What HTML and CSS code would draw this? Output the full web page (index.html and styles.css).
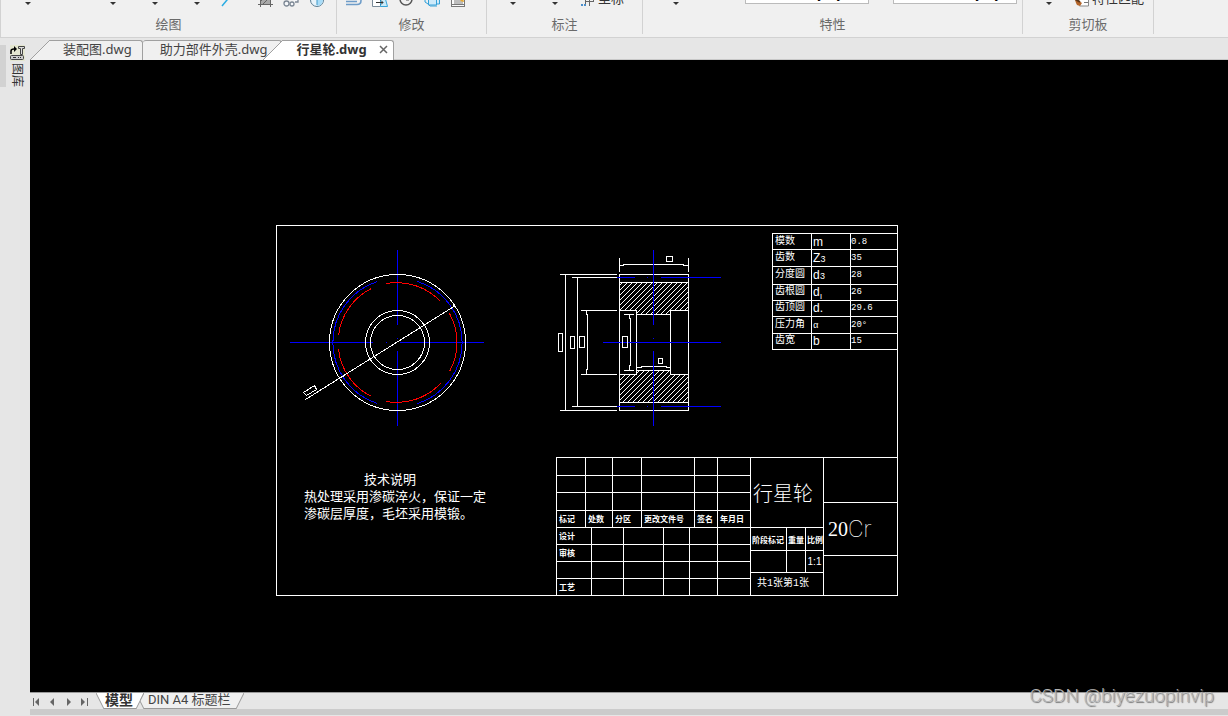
FILE: index.html
```html
<!DOCTYPE html>
<html lang="zh-CN">
<head>
    <meta charset="UTF-8">
    <meta name="viewport" content="width=device-width, initial-scale=1.0">
    <title>行星轮.dwg</title>
    <link rel="stylesheet" href="styles.css">
</head>
<body>
    <!-- 功能区 -->
    <header class="ribbon">
        <section class="group group-draw">
            <div class="tools">
                <button class="drop" aria-label="直线"></button>
                <button class="drop spaced" aria-label="多段线"></button>
                <button class="drop" aria-label="圆"></button>
                <button class="drop" aria-label="圆弧"></button>
                <button class="tool slim" aria-label="射线">
                    <svg width="16" height="16"><path d="M4 14L14 2" stroke="#29abe2" stroke-width="1.5"/></svg>
                </button>
                <button class="tool after-slim" aria-label="填充">
                    <svg width="16" height="16"><rect x="3" y="2" width="10" height="10" fill="#a9a9a9"/><path d="M1 12.5H16M3.5 0V15M13.5 0V15M3 10l8-8M6 12l7-7" stroke="#666" fill="none"/></svg>
                </button>
                <button class="tool" aria-label="块">
                    <svg width="16" height="16"><g fill="#f5f7fa" stroke="#7c8794" stroke-width="1.3"><circle cx="3.5" cy="11.5" r="2.5"/><circle cx="9" cy="12" r="2"/><path d="M6 4h9v6h-3M7 4v4"/></g></svg>
                </button>
                <button class="tool" aria-label="面域">
                    <svg width="16" height="16"><circle cx="8" cy="8" r="6.5" fill="#e8f3fa" stroke="#5b7e94"/><path d="M8 2a6 6 0 0 1 0 12z" fill="#a8dcf8"/><path d="M8 1v12" stroke="#4199c8"/></svg>
                </button>
            </div>
            <h2>绘图</h2>
        </section>
        <section class="group group-modify">
            <div class="tools">
                <button class="tool" aria-label="偏移">
                    <svg width="16" height="16"><path d="M0 9.500h11M0 12.500h11c3 0 4-2 4-4s-2-3-3-3" fill="none" stroke="#6e9cc8" stroke-width="1.6"/></svg>
                </button>
                <button class="tool" aria-label="拉伸">
                    <svg width="16" height="16"><path d="M.5 1v13.500h8V1" fill="#fff" stroke="#7a8b99"/><path d="M8.500 14.500h7l-3-11h-4z" fill="#c9ebfa" stroke="#36a4d9"/><path d="M4 10.500h7m-2-2l2 2-2 2" fill="none" stroke="#333"/></svg>
                </button>
                <button class="tool" aria-label="旋转">
                    <svg width="16" height="16"><circle cx="8" cy="7" r="6" fill="none" stroke="#555" stroke-width="1.5"/><path d="M8 8h3V5" fill="none" stroke="#555"/></svg>
                </button>
                <button class="tool" aria-label="阵列">
                    <svg width="16" height="16"><g fill="#cdeafa" stroke="#35a1d8"><path d="M4.500 4v9h8V4M1 7v3l3 2M15.500 3v9h-3"/><path d="M4 12l2 2h7" fill="none"/></g></svg>
                </button>
                <button class="tool" aria-label="图像">
                    <svg width="16" height="16"><rect x="1.500" y=".5" width="13" height="14" fill="#fafafa" stroke="#777"/><path d="M4 2h9v10H4z" fill="#bdbdbd"/><path d="M10 9l3-3 1 4z" fill="#e6a72e"/><path d="M2 12.500h12" stroke="#777"/></svg>
                </button>
            </div>
            <h2>修改</h2>
        </section>
        <section class="group group-dimension">
            <div class="tools">
                <button class="drop" aria-label="线性"></button>
                <button class="drop" aria-label="引线"></button>
                <button class="text-tool">
                    <svg width="16" height="16"><path d="M5 9.500h9M9.500 2v12M5.500 14V6m8 3V3" fill="none" stroke="#666"/><path d="M1 12h2v2H1zM4 12h2v2H4z" fill="#4b8dca"/></svg>
                    <span>坐标</span>
                </button>
            </div>
            <h2>标注</h2>
        </section>
        <section class="group group-props">
            <div class="tools">
                <button class="drop" aria-label="图层"></button>
                <select class="linetype" aria-label="线型"><option>ByLayer</option></select>
                <select class="lineweight" aria-label="线宽"><option>ByLayer</option></select>
            </div>
            <h2>特性</h2>
        </section>
        <section class="group group-clip">
            <div class="tools">
                <button class="drop" aria-label="粘贴"></button>
                <button class="text-tool">
                    <svg width="16" height="16"><path d="M5.500 1h9v13h-9" fill="#fff" stroke="#888"/><path d="M8 4.500h5M10 7.500h4M10 10.500h4" stroke="#777"/><path d="M1 8l4 1 3 2-2 3-3-1-1-2z" fill="#b4652a"/><path d="M1 7l5 3" stroke="#5c3518" stroke-width="2"/></svg>
                    <span>特性匹配</span>
                </button>
            </div>
            <h2>剪切板</h2>
        </section>
    </header>

    <div class="workspace">
        <aside class="sidebar">
            <button class="library">
                <svg width="15" height="16"><path d="M0 0h15v16H0z" fill="#e4e6d0"/><path d="M1 9V6q0-2 3-2h2" fill="none" stroke="#000" stroke-width="1.500"/><path d="M4 1l3 3-3 3z"/><path d="M8.500 1.500h6v2h-2v6h-2v-6h-2z" fill="#ddd" stroke="#444"/><rect x=".5" y="10.500" width="13" height="4" rx="1" fill="#ccc" stroke="#444"/><path d="M3 12.500h3m2 0h1m1 0h1" stroke="#333"/></svg>
                <span>图库</span>
            </button>
        </aside>

        <main class="editor">
            <nav class="file-tabs">
                <a class="file-tab" href="#">
                    <svg class="slant" width="20" height="20"><path d="M0 20L20 0V20z" fill="#f0f0f0"/><path d="M0 20L20 0" stroke="#a0a0a0"/></svg>
                    <span class="first">装配图.dwg</span>
                </a>
                <a class="file-tab" href="#"><span class="second">助力部件外壳.dwg</span></a>
                <a class="file-tab active" href="#">
                    <svg class="slant" width="20" height="20"><path d="M0 20L20 0V20z" fill="#fff"/><path d="M0 20L20 0" stroke="#a0a0a0"/></svg>
                    <span>行星轮.dwg
                        <svg width="9" height="9"><path d="M1 1l7 7M8 1L1 8" stroke="#666" stroke-width="1.500"/></svg>
                    </span>
                </a>
            </nav>

            <div class="canvas">
                <div class="sheet">
                    <svg class="views" width="620" height="369" viewBox="1 1 620 369" fill="none" stroke="#fff" shape-rendering="crispEdges">
                        <defs>
                            <pattern id="hatch" width="5" height="5" patternUnits="userSpaceOnUse">
                                <path d="M0 4h1v1H0zM1 3h1v1H1zM2 2h1v1H2zM3 1h1v1H3zM4 0h1v1H4z" fill="#fff" stroke="none"/>
                            </pattern>
                        </defs>

                        <!-- 主视图 -->
                        <g transform="translate(121.5 117.5)">
                            <path stroke="#00f" d="M-108 0H-25M-12 0h1M2 0H86M0-93V-18M0-5v1M0 8V83"/>
                            <path stroke="#00f" d="M20-61A64 64 0 0 1 20 61M-20-61A64 64 0 0 0-20 61"/>
                            <path stroke="#f00" d="M-26-54A60 60 0 0 0-59-7M-59 7A60 60 0 0 0-26 54M-11-59A60 60 0 0 1 43-41M52-29A60 60 0 0 1 52 29M-11 59A60 60 0 0 0 43 41"/>
                            <circle r="68"/>
                            <circle r="32"/>
                            <circle r="27"/>
                            <path d="M58-37L-92 57M-94 50l11-7 2 4-10 6z"/>
                            <path d="M56-37l2 2M-55 35l2-2"/>
                        </g>

                        <!-- 剖视图 -->
                        <g transform="translate(269 15)">
                            <path fill="url(#hatch)" d="M74.500 42.500h69v28h-18v4h-34v-4h-17zM74.500 162.500h69v-28h-18v-4h-34v4h-17z"/>
                            <path d="M74.500 34.500h69v136h-69zM91.500 70.500v64M125.500 70.500v64"/>
                            <path d="M15 34.500h57M15 170.500h57M20.500 34.500v136M27 37.500h45M27 166.500h45M32.500 37.500v129"/>
                            <path d="M36 70.500h36M36 134.500h36M41.500 70.500v4h1v55h-1v5M79 74.500h10M79 130.500h10M84.500 74.500v4h1v47h-1v5"/>
                            <path d="M74.500 18v14M143.500 18v14M74.500 25.500h4v-1h60v1h5M91.500 127.500h5v-1h25v1h4"/>
                            <path d="M121.500 16.500h6v5h-6zM113.500 118.500h4v5h-4zM13.500 93.500h4v18h-4zM25.500 96.500h4v12h-4zM34.500 96.500h5v11h-5z"/>
                            <path stroke="#00f" d="M72 37.500h18M102 37.500h1M116 37.500h60M72 166.500h18M102 166.500h1M116 166.500h60M58 102.500h118M108.500 10v75M108.500 98v1M108.500 111v75"/>
                            <path d="M77.500 96.500h5v11h-5z"/>
                        </g>
                    </svg>

                    <table class="params">
                        <colgroup><col class="p-name"><col class="p-sign"><col></colgroup>
                        <tr><th>模数</th><td class="sign">m</td><td>0.8</td></tr>
                        <tr><th>齿数</th><td class="sign">Z<small>3</small></td><td>35</td></tr>
                        <tr><th>分度圆</th><td class="sign">d<small>3</small></td><td>28</td></tr>
                        <tr><th>齿根圆</th><td class="sign">d<sub>ı</sub></td><td>26</td></tr>
                        <tr><th>齿顶圆</th><td class="sign">d.</td><td>29.6</td></tr>
                        <tr><th>压力角</th><td class="sign"><small>α</small></td><td>20°</td></tr>
                        <tr><th>齿宽</th><td class="sign">b</td><td>15</td></tr>
                    </table>

                    <div class="notes">
                        <h3>技术说明</h3>
                        <p>热处理采用渗碳淬火，保证一定<br>渗碳层厚度，毛坯采用模锻。</p>
                    </div>

                    <!-- 标题栏 -->
                    <div class="title-block">
                        <div class="records">
                            <table class="revisions">
                                <colgroup><col class="w28"><col class="w26"><col class="w28"><col class="w52"><col class="w22"><col></colgroup>
                                <tr><td></td><td></td><td></td><td></td><td></td><td></td></tr>
                                <tr><td></td><td></td><td></td><td></td><td></td><td></td></tr>
                                <tr><td></td><td></td><td></td><td></td><td></td><td></td></tr>
                                <tr><th>标记</th><th>处数</th><th>分区</th><th>更改文件号</th><th>签名</th><th>年月日</th></tr>
                            </table>
                            <table class="signatures">
                                <colgroup><col class="w34"><col class="w31"><col class="w39"><col class="w25"><col class="w27"><col></colgroup>
                                <tr><th>设计</th><td></td><td></td><td></td><td></td><td></td></tr>
                                <tr><th>审核</th><td></td><td></td><td></td><td></td><td></td></tr>
                                <tr><td></td><td></td><td></td><td></td><td></td><td></td></tr>
                                <tr><th>工艺</th><td></td><td></td><td></td><td></td><td></td></tr>
                            </table>
                        </div>
                        <div class="part">
                            <div class="part-name">行星轮</div>
                            <div class="small-text">阶段标记</div>
                            <div class="small-text">重量</div>
                            <div class="small-text">比例</div>
                            <div></div>
                            <div></div>
                            <div class="scale">1:1</div>
                            <div class="pages">共1张第1张</div>
                        </div>
                        <div class="stock">
                            <div></div>
                            <div class="material">20<span>Cr</span></div>
                            <div></div>
                        </div>
                    </div>
                </div>
            </div>

            <footer class="layout-bar">
                <div class="pager">
                    <button aria-label="第一个"><svg width="8" height="8"><path d="M1.500 0v8" stroke="#666"/><path d="M7 0v8L3 4z" fill="#666"/></svg></button>
                    <button aria-label="上一个"><svg width="8" height="8"><path d="M6 0v8L2 4z" fill="#666"/></svg></button>
                    <button aria-label="下一个"><svg width="8" height="8"><path d="M3 0v8l4-4z" fill="#666"/></svg></button>
                    <button aria-label="最后一个"><svg width="8" height="8"><path d="M7.500 0v8" stroke="#666"/><path d="M1 0v8l4-4z" fill="#666"/></svg></button>
                </div>
                <a class="layout-tab current" href="#">
                    <svg width="8" height="17"><path d="M0 0l8 16V0z" fill="#fff"/><path d="M0 0l8 16" stroke="#999"/></svg>
                    <span>模型</span>
                    <svg width="8" height="17"><path d="M8 0L0 16V0z" fill="#fff"/><path d="M8 0L0 16" stroke="#999"/></svg>
                </a>
                <a class="layout-tab second-layout" href="#">
                    <svg width="4" height="17"><path d="M0 8l4 8V0z" fill="#f0f0f0"/><path d="M0 8l4 8M4 0L0 8" stroke="#999"/></svg>
                    <span>DIN A4 标题栏</span>
                    <svg width="8" height="17"><path d="M8 0L0 16V0z" fill="#f0f0f0"/><path d="M8 0L0 16" stroke="#999"/></svg>
                </a>
            </footer>
            <div class="status"></div>
        </main>
    </div>

    <div class="watermark">CSDN @biyezuopinvip</div>
</body>
</html>
```

FILE: styles.css
```css
* {
    box-sizing: border-box;
}
body {
    margin: 0;
    height: 100vh;
    display: flex;
    flex-direction: column;
    overflow: hidden;
    position: relative;
    background: #e6e6e6;
    color: #444;
    font-family: "Noto Sans", "Noto Sans CJK SC", sans-serif;
    font-size: 13px;
}
button {
    border: 0;
    padding: 0;
    background: none;
    color: inherit;
    font: inherit;
}
a {
    color: inherit;
    text-decoration: none;
}
svg {
    display: block;
    flex: none;
}

/* 功能区 */
.ribbon {
    flex: none;
    display: flex;
    height: 38px;
    background: #f0f0f0;
    border-bottom: 1px solid #d2d2d2;
    border-left: 1px solid #d2d2d2;
}
.group {
    height: 34px;
    border-right: 1px solid #d2d2d2;
}
.group h2 {
    margin: 0;
    padding-top: 6px;
    font-size: 13px;
    font-weight: normal;
    line-height: 20px;
    text-align: center;
    color: #6a6a6a;
}
.tools {
    display: flex;
    align-items: flex-end;
    height: 8px;
}
.group-draw { width: 336px; }
.group-modify { width: 150px; }
.group-dimension { width: 156px; }
.group-props { width: 380px; }
.group-clip { width: 131px; }
.group-draw .tools { padding-left: 6px; }
.group-modify .tools { padding-left: 4px; }
.group-dimension .tools { padding-left: 5px; }
.group-props .tools { padding-left: 12px; }
.group-clip .tools { padding-left: 5px; }
.drop {
    flex: none;
    width: 42px;
    height: 24px;
    display: flex;
    align-items: flex-end;
    justify-content: center;
    padding-bottom: 3px;
}
.drop::after {
    content: "";
    border: 3px solid transparent;
    border-top-color: #333;
    border-bottom: 0;
}
.spaced {
    margin-left: 43px;
}
.tool {
    flex: none;
    width: 26px;
    display: flex;
    justify-content: center;
}
.slim {
    width: 16px;
}
.after-slim {
    margin-left: 18px;
}
.text-tool {
    display: flex;
    align-items: flex-end;
    gap: 2px;
    margin-left: 4px;
}
.text-tool span {
    line-height: 18px;
    padding-bottom: 1px;
    color: #333;
    white-space: nowrap;
}
.tools select {
    flex: none;
    appearance: none;
    width: 124px;
    height: 22px;
    margin: 0 0 4px 24px;
    padding: 0 0 0 64px;
    border: 1px solid #bbb;
    border-radius: 0;
    background: #fff;
    color: #000;
    font: 12px "Noto Sans", sans-serif;
}
.tools .linetype {
    margin-left: 48px;
}
.tools .lineweight {
    padding-left: 74px;
}

.workspace {
    flex: 1;
    display: flex;
    min-height: 0;
}
.sidebar {
    flex: none;
    width: 30px;
    padding-top: 7px;
}
.library {
    display: flex;
    flex-direction: column;
    align-items: center;
    gap: 2px;
    width: 24px;
    height: 42px;
    border-left: 6px solid #d2d2d2;
    padding-left: 4px;
}
.library span {
    writing-mode: vertical-rl;
    text-orientation: sideways;
    font-size: 12px;
    line-height: 14px;
    color: #333;
}
.editor {
    flex: 1;
    min-width: 0;
    display: flex;
    flex-direction: column;
}

/* 文件标签 */
.file-tabs {
    flex: none;
    display: flex;
    height: 22px;
    padding-top: 2px;
    border-bottom: 1px solid #c8c8c8;
}
.file-tab {
    display: flex;
    height: 20px;
    line-height: 16px;
}
.file-tab > span {
    display: flex;
    align-items: center;
    gap: 12px;
    padding: 0 5px 3px 13px;
    border: 1px solid #a0a0a0;
    border-width: 1px 1px 0 0;
    border-top-right-radius: 3px;
    background: #f0f0f0;
    white-space: nowrap;
}
.file-tab > .first {
    padding-right: 10px;
}
.file-tab > .second {
    padding-right: 14px;
    padding-left: 17px;
    border-top-left-radius: 3px;
}
.active {
    margin-left: -19px;
    font-weight: bold;
    color: #333;
}
.active > span {
    background: #fff;
}

/* 图纸 */
.canvas {
    flex: 1;
    min-height: 0;
    overflow: hidden;
    padding: 165px 0 0 246px;
    background: #000;
    color: #fff;
}
.sheet {
    position: relative;
    width: 622px;
    height: 371px;
    border: 1px solid #fff;
}
.sheet table {
    table-layout: fixed;
    border-collapse: separate;
    border-spacing: 1px;
    background: #fff;
}
.sheet td, .sheet th {
    padding: 0;
    background: #000;
    font-weight: normal;
    text-align: left;
    white-space: nowrap;
}
.params {
    position: absolute;
    top: 7px;
    right: -1px;
    width: 126px;
    height: 117px;
    font: 9px "Liberation Mono", "Noto Sans CJK SC", monospace;
}
.params .p-name { width: 38px; }
.params .p-sign { width: 38px; }
.params th {
    padding-left: 2px;
    font-size: 10px;
    line-height: 12px;
}
.params td {
    line-height: 12px;
}
.params .sign {
    padding-left: 1px;
    font-family: "Liberation Sans", sans-serif;
    font-size: 12px;
}
.params small {
    font: 9px "Liberation Mono", monospace;
}
.params sub {
    font-size: 9px;
    line-height: 0;
}
.notes {
    position: absolute;
    top: 245px;
    left: 27px;
    line-height: 17px;
    white-space: nowrap;
}
.notes h3 {
    margin: 0;
    padding-left: 60px;
    font-size: 13px;
    font-weight: normal;
}
.notes p {
    margin: 0;
}

/* 标题栏 */
.title-block {
    position: absolute;
    right: -1px;
    bottom: -1px;
    width: 342px;
    height: 139px;
    display: flex;
}
.records {
    width: 195px;
}
.records table {
    width: 195px;
    font-size: 8px;
    line-height: 12px;
}
.records td, .records th {
    height: 16px;
}
.records th {
    padding-left: 2px;
    font-weight: bold;
}
.revisions {
    height: 71px;
}
.signatures {
    height: 69px;
    margin-top: -1px;
}
.w22 { width: 22px; }
.w25 { width: 25px; }
.w26 { width: 26px; }
.w27 { width: 27px; }
.w28 { width: 28px; }
.w31 { width: 31px; }
.w34 { width: 34px; }
.w39 { width: 39px; }
.w52 { width: 52px; }
.part, .stock {
    display: grid;
    gap: 1px;
    padding: 1px 1px 1px 0;
    background: #fff;
}
.part {
    width: 73px;
    grid-template-columns: 35px 18px 17px;
    grid-template-rows: 69px 22px 21px 1fr;
}
.stock {
    width: 74px;
    grid-template-rows: 44px 52px 1fr;
}
.part > div, .stock > div {
    display: flex;
    align-items: center;
    background: #000;
    white-space: nowrap;
}
.part .part-name {
    grid-column: span 3;
    padding-left: 2px;
    font-size: 20px;
    font-weight: 300;
}
.part .small-text {
    padding-left: 1px;
    font-size: 8px;
    font-weight: bold;
}
.part .scale {
    font: 10px "Liberation Sans", sans-serif;
    justify-content: center;
}
.part .pages {
    grid-column: span 3;
    padding: 0 0 6px 6px;
    font: 10px "Liberation Mono", "Noto Sans CJK SC", monospace;
}
.stock .material {
    padding-left: 4px;
    font: 20px "Liberation Serif", serif;
}
.material span {
    font: 100 24px Roboto, sans-serif;
}

/* 布局标签 */
.layout-bar {
    flex: none;
    display: flex;
    height: 17px;
    border-top: 1px solid #999;
}
.pager {
    display: flex;
    align-items: center;
    padding: 2px 0 0 2px;
}
.pager button {
    width: 16px;
    display: flex;
}
.layout-tab {
    display: flex;
    height: 16px;
}
.layout-tab span {
    padding: 0 5px 0 4px;
    border-bottom: 1px solid #999;
    background: #f0f0f0;
    font-family: Roboto, "Noto Sans CJK SC", sans-serif;
    line-height: 14px;
    white-space: nowrap;
}
.layout-tab.current span {
    padding: 0 3px 0 1px;
    background: #fff;
    font-size: 14px;
    font-weight: bold;
    color: #333;
}
.second-layout {
    margin-left: -4px;
}
.status {
    flex: none;
    height: 7px;
    background: #cbcbcb;
    border-bottom: 1px solid #e6e6e6;
}
.watermark {
    position: absolute;
    right: 14px;
    bottom: 8px;
    font: 300 19px/24px Roboto, "Liberation Sans", sans-serif;
    color: #b4b4b4;
    text-shadow: 1px 1px 1px #777;
}
```
